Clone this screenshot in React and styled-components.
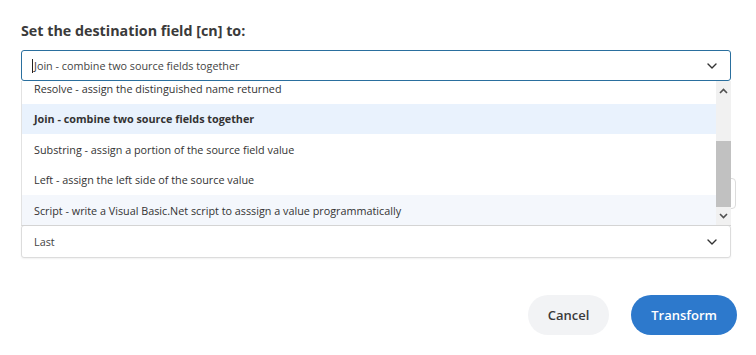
import React from 'react'
import styled, { createGlobalStyle } from 'styled-components'

const GlobalStyle = createGlobalStyle`
  html, body {
    margin: 0;
    padding: 0;
    background: #fff;
    font-family: "Open Sans", "Liberation Sans", sans-serif;
  }
`

const options = [
  { label: 'Resolve - assign the distinguished name returned' },
  { label: 'Join - combine two source fields together', selected: true },
  { label: 'Substring - assign a portion of the source field value' },
  { label: 'Left - assign the left side of the source value' },
  { label: 'Script - write a Visual Basic.Net script to asssign a value programmatically', hover: true },
]

const Chevron = ({ size = 10 }) => (
  <svg width={size} height={size * 0.6} viewBox="0 0 10 6" fill="none">
    <path d="M1 1l4 4 4-4" stroke="#333" strokeWidth="1.4" strokeLinecap="round" strokeLinejoin="round" />
  </svg>
)

const ArrowUp = () => (
  <svg width="9" height="6" viewBox="0 0 9 6" fill="none">
    <path d="M1 5l3.5-3.5L8 5" stroke="#505050" strokeWidth="1.6" />
  </svg>
)

const ArrowDown = () => (
  <svg width="9" height="6" viewBox="0 0 9 6" fill="none">
    <path d="M1 1l3.5 3.5L8 1" stroke="#505050" strokeWidth="1.6" />
  </svg>
)

const App = () => {
  return (
    <Page>
      <GlobalStyle />
      <Heading>Set the destination field [cn] to:</Heading>

      <SelectWrap>
        <SelectBox $focused>
          <Caret />
          <SelectText>Join - combine two source fields together</SelectText>
          <Chevron />
        </SelectBox>

        <Menu>
          <MenuList>
            {options.map((o) => (
              <MenuItem key={o.label} $selected={o.selected} $hover={o.hover}>
                {o.label}
              </MenuItem>
            ))}
          </MenuList>
          <Scrollbar>
            <ScrollButton $up><ArrowUp /></ScrollButton>
            <Track>
              <Thumb />
            </Track>
            <ScrollButton><ArrowDown /></ScrollButton>
          </Scrollbar>
        </Menu>
      </SelectWrap>

      <HiddenRow>
        <HiddenInput />
      </HiddenRow>

      <SelectBox>
        <SelectText>Last</SelectText>
        <Chevron />
      </SelectBox>

      <Actions>
        <Button>Cancel</Button>
        <Button $primary>Transform</Button>
      </Actions>
    </Page>
  )
}

const Page = styled.div`
  width: 710px;
  padding: 21px 25px 0 21px;
`

const Heading = styled.h2`
  margin: 0 0 9px;
  font-size: 14.3px;
  line-height: 20px;
  font-weight: 700;
  color: #3a3a3a;
`

const SelectWrap = styled.div`
  position: relative;
  z-index: 2;
`

const SelectBox = styled.div`
  height: ${({ $focused }) => ($focused ? '31px' : '33px')};
  box-sizing: border-box;
  display: flex;
  align-items: center;
  padding: 0 13px 0 12px;
  border: 1px solid ${({ $focused }) => ($focused ? '#2a6f9e' : '#dcdcdc')};
  border-radius: 3px;
  background: #fff;
  box-shadow: ${({ $focused }) => ($focused ? 'none' : '0 1px 2px rgba(0,0,0,0.06)')};
`

const Caret = styled.span`
  width: 1px;
  height: 14px;
  background: #222;
  margin-right: 1px;
  margin-left: -2px;
`

const SelectText = styled.span`
  flex: 1;
  font-family: "Open Sans", "Liberation Sans", sans-serif;
  font-size: 10.8px;
  color: #444;
`

const Menu = styled.div`
  position: absolute;
  top: 100%;
  left: 0;
  right: 0;
  height: 144px;
  display: flex;
  background: #fff;
  border-left: 1px solid #e2e2e2;
  border-bottom: 1px solid #d4d4d4;
  overflow: hidden;
`

const MenuList = styled.div`
  flex: 1;
  margin-top: -8px;
`

const MenuItem = styled.div`
  height: 30.5px;
  display: flex;
  align-items: center;
  padding-left: 12px;
  font-size: 10.8px;
  color: #333;
  font-weight: ${({ $selected }) => ($selected ? 700 : 400)};
  background: ${({ $selected, $hover }) =>
    $selected ? '#e9f2fd' : $hover ? '#f4f7fc' : '#fff'};
`

const Scrollbar = styled.div`
  width: 15px;
  display: flex;
  flex-direction: column;
  background: #f1f1f1;
`

const ScrollButton = styled.div`
  height: 18px;
  display: flex;
  align-items: ${({ $up }) => ($up ? 'flex-end' : 'center')};
  padding-bottom: ${({ $up }) => ($up ? '5px' : '0')};
  box-sizing: border-box;
  justify-content: center;
`

const Track = styled.div`
  flex: 1;
  display: flex;
  flex-direction: column;
  justify-content: flex-end;
`

const Thumb = styled.div`
  height: 66px;
  background: #c1c1c1;
`

const HiddenRow = styled.div`
  display: flex;
  justify-content: flex-end;
  margin: 97px -5px 16px 0;
`

const HiddenInput = styled.div`
  width: 300px;
  height: 31px;
  box-sizing: border-box;
  border: 1px solid #dcdcdc;
  border-radius: 4px;
`

const Actions = styled.div`
  display: flex;
  justify-content: flex-end;
  gap: 22px;
  margin: 37px -6px 0 0;
`

const Button = styled.button`
  height: 40px;
  padding: 0 20px;
  border: none;
  border-radius: 20px;
  font-family: "Open Sans", "Liberation Sans", sans-serif;
  font-size: 13px;
  font-weight: 600;
  color: ${({ $primary }) => ($primary ? '#fff' : '#3a3a3a')};
  background: ${({ $primary }) => ($primary ? '#2d79cc' : '#f2f3f5')};
  cursor: pointer;
`

export default App
